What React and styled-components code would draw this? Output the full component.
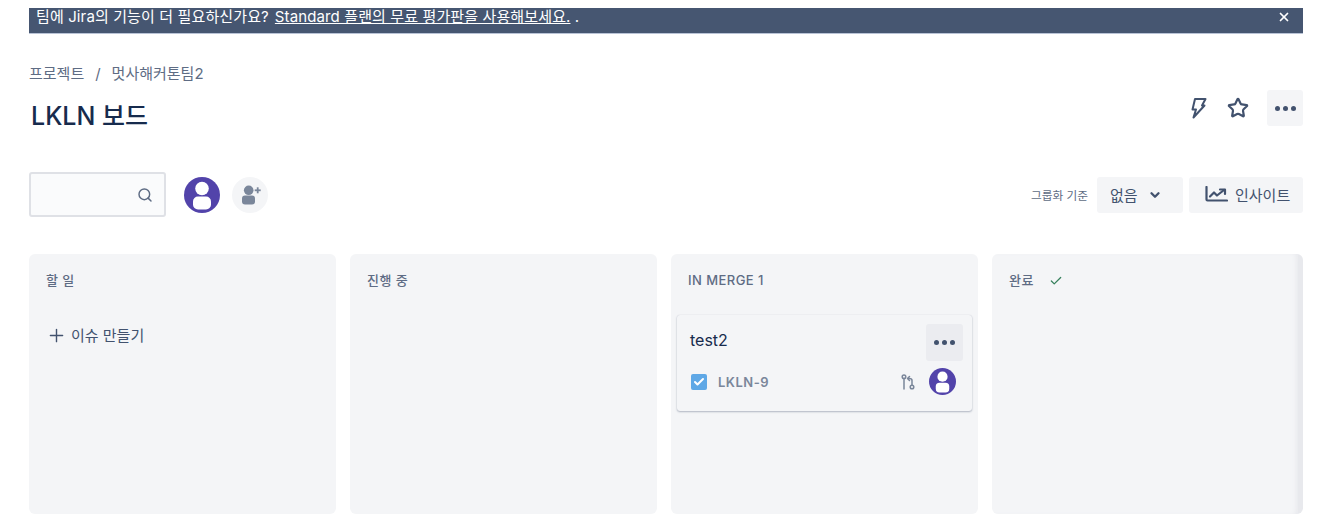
import React from 'react';
import styled, { createGlobalStyle } from 'styled-components';
import { Search, Star, X, ChevronDown, Plus, Check } from 'lucide-react';

const GlobalStyle = createGlobalStyle`
  html, body { margin: 0; padding: 0; background: #fff; }
  body {
    font-family: Inter, "Noto Sans CJK KR", sans-serif;
    color: #172b4d;
    overflow: hidden;
  }
`;

const Page = styled.div`
  box-sizing: border-box;
  width: 1338px;
  height: 516px;
  padding: 8px 35px 0 29px;
  overflow: hidden;
`;

const Banner = styled.div`
  display: flex;
  align-items: flex-start;
  justify-content: space-between;
  box-sizing: border-box;
  height: 26px;
  padding: 0 12px 0 7px;
  background: #465671;
  border-bottom: 1px solid #b9c3d6;
  color: #fff;
  font-size: 15px;
  line-height: 18px;
  letter-spacing: 0.12px;
`;

const BannerLink = styled.a`
  margin-left: 6px;
  color: #fff;
  text-decoration: underline;
`;

const Crumbs = styled.div`
  display: flex;
  gap: 11px;
  margin-top: 30px;
  color: #5e6c84;
  font-size: 15px;
  line-height: 20px;
`;

const TitleRow = styled.div`
  display: flex;
  justify-content: space-between;
  align-items: flex-start;
  height: 46px;
  margin-top: 6px;
`;

const Title = styled.h1`
  margin: 10px 0 0 2px;
  font-size: 25px;
  font-weight: 500;
  line-height: 32px;
  color: #172b4d;
`;

const Actions = styled.div`
  display: flex;
  align-items: center;
  height: 36px;
  color: #42526e;
`;

const IconSlot = styled.span`
  display: flex;
  align-items: center;
  justify-content: center;
  width: ${(props) => props.$width}px;
  height: 36px;
`;

const SquareButton = styled.button`
  display: flex;
  align-items: center;
  justify-content: center;
  gap: 3px;
  width: ${(props) => props.$size}px;
  height: ${(props) => props.$size}px;
  padding: 0;
  border: 0;
  border-radius: 3px;
  background: ${(props) => props.$bg};
`;

const Dot = styled.i`
  display: block;
  width: 5px;
  height: 5px;
  border-radius: 50%;
  background: #42526e;
`;

const Toolbar = styled.div`
  display: flex;
  justify-content: space-between;
  align-items: center;
  height: 45px;
  margin-top: 36px;
`;

const ToolGroup = styled.div`
  display: flex;
  align-items: center;
`;

const SearchBox = styled.div`
  display: flex;
  align-items: center;
  justify-content: flex-end;
  box-sizing: border-box;
  width: 137px;
  height: 45px;
  padding-right: 11px;
  margin-right: 18px;
  background: #fafbfc;
  border: 2px solid #dfe1e6;
  border-radius: 3px;
  color: #5e6c84;
`;

const AddMember = styled.span`
  display: flex;
  width: 36px;
  height: 36px;
  margin-left: 12px;
  border-radius: 50%;
  background: #f4f5f7;
`;

const GroupLabel = styled.span`
  margin-right: 9px;
  color: #5e6c84;
  font-size: 11.7px;
`;

const ToolButton = styled.button`
  display: flex;
  align-items: center;
  box-sizing: border-box;
  width: ${(props) => props.$width}px;
  height: 36px;
  margin-left: ${(props) => props.$gap}px;
  padding: 0 0 0 ${(props) => props.$pad}px;
  gap: ${(props) => props.$inner}px;
  border: 0;
  border-radius: 3px;
  background: #f4f5f7;
  color: #42526e;
  font-family: inherit;
  font-size: 15px;
  font-weight: 400;
`;

const Board = styled.div`
  display: flex;
  gap: 14px;
  margin-top: 37px;
`;

const Column = styled.section`
  box-sizing: border-box;
  flex: ${(props) => (props.$last ? '1' : '0 0 307px')};
  height: 260px;
  padding: 18px 6px 0;
  background: #f4f5f7;
  border-radius: 6px;
  ${(props) =>
    props.$last &&
    `border-right: 5px solid #e8e9ed;
     box-shadow: inset -4px 0 4px -2px #e9eaee;`}
`;

const ColumnHead = styled.div`
  display: flex;
  align-items: center;
  gap: 15px;
  height: 17px;
  padding-left: 11px;
  color: #5e6c84;
  font-size: 13px;
  font-weight: 500;
  line-height: 17px;
  letter-spacing: 0.45px;
`;

const CreateIssue = styled.div`
  display: flex;
  align-items: center;
  gap: 4px;
  margin: 36px 0 0 11px;
  color: #42526e;
  font-size: 15px;
  line-height: 20px;
`;

const Card = styled.article`
  box-sizing: border-box;
  height: 96px;
  margin-top: 26px;
  padding: 9px 9px 0 13px;
  background: #f4f5f7;
  border-radius: 3px;
  box-shadow: 0 1px 2px rgba(9, 30, 66, 0.28), 0 0 1px rgba(9, 30, 66, 0.16);
`;

const CardTop = styled.div`
  display: flex;
  justify-content: space-between;
  height: 37px;
`;

const CardTitle = styled.span`
  margin-top: 6px;
  color: #172b4d;
  font-size: 16px;
  line-height: 20px;
`;

const CardBottom = styled.div`
  display: flex;
  align-items: center;
  height: 27px;
  margin: 7px 7px 0 1px;
`;

const CheckMark = styled.span`
  display: flex;
  align-items: center;
  justify-content: center;
  width: 16px;
  height: 16px;
  border-radius: 2px;
  background: #5fa8e6;
`;

const IssueKey = styled.span`
  flex: 1;
  margin-left: 11px;
  color: #7a869a;
  font-size: 13px;
  font-weight: 600;
  letter-spacing: 0.5px;
`;

const BranchWrap = styled.span`
  display: flex;
  margin-right: 14px;
`;

function UserAvatar({ size }) {
  return (
    <svg width={size} height={size} viewBox="0 0 36 36">
      <circle cx="18" cy="18" r="18" fill="#5243aa" />
      <circle cx="18" cy="11.5" r="6.8" fill="#fff" />
      <rect x="9" y="19.5" width="18" height="13" rx="5" fill="#fff" />
    </svg>
  );
}

function Bolt() {
  return (
    <svg width="20" height="22" viewBox="0 0 20 22" fill="none" stroke="#42526e" strokeWidth="2" strokeLinejoin="round" strokeLinecap="round">
      <path d="M7 2H17.5L14 8.5H16.5L5.5 20.5 8 12.5H4.5z" />
    </svg>
  );
}

function AddPerson() {
  return (
    <svg width="36" height="36" viewBox="0 0 36 36" fill="#7a869a">
      <circle cx="16.7" cy="13.3" r="4.8" />
      <rect x="10" y="18.5" width="13" height="9" rx="3" />
      <rect x="22.7" y="12.4" width="6" height="1.8" />
      <rect x="24.8" y="10.3" width="1.8" height="6" />
    </svg>
  );
}

function InsightIcon() {
  return (
    <svg width="23" height="17" viewBox="0 0 23 17" fill="none" stroke="#42526e" strokeWidth="2.2" strokeLinecap="round" strokeLinejoin="round">
      <path d="M1.5 1v12.5c0 .7.4 1 1 1H22" />
      <path d="M5 10.5l4-4 3 3 7-5.5" />
      <path d="M15 3.5h5V8" />
    </svg>
  );
}

function BranchIcon() {
  return (
    <svg width="14" height="16" viewBox="0 0 14 16" fill="none" stroke="#7a869a" strokeWidth="1.5" strokeLinecap="round" strokeLinejoin="round">
      <circle cx="3" cy="2.8" r="1.8" />
      <path d="M3 4.6V15" />
      <circle cx="11" cy="13" r="1.8" />
      <path d="M11 11.2V6.5C11 5 10 4.5 8.5 4.5H7" />
      <path d="M8.5 2.5L6.5 4.5l2 2" />
    </svg>
  );
}

function MoreButton({ size, bg }) {
  return (
    <SquareButton $size={size} $bg={bg}>
      <Dot />
      <Dot />
      <Dot />
    </SquareButton>
  );
}

export default function App() {
  return (
    <>
      <GlobalStyle />
      <Page>
        <Banner>
          <span>
            팀에 Jira의 기능이 더 필요하신가요?
            <BannerLink>Standard 플랜의 무료 평가판을 사용해보세요.</BannerLink> .
          </span>
          <X size={14} strokeWidth={3} style={{ marginTop: 2 }} />
        </Banner>
        <Crumbs>
          <span>프로젝트</span>
          <span>/</span>
          <span>멋사해커톤팀2</span>
        </Crumbs>
        <TitleRow>
          <Title>LKLN 보드</Title>
          <Actions>
            <IconSlot $width={40}><Bolt /></IconSlot>
            <IconSlot $width={39}><Star size={22} strokeWidth={2.4} /></IconSlot>
            <IconSlot $width={10} />
            <MoreButton size={36} bg="#f4f5f7" />
          </Actions>
        </TitleRow>
        <Toolbar>
          <ToolGroup>
            <SearchBox><Search size={16} strokeWidth={2.2} /></SearchBox>
            <UserAvatar size={36} />
            <AddMember><AddPerson /></AddMember>
          </ToolGroup>
          <ToolGroup>
            <GroupLabel>그룹화 기준</GroupLabel>
            <ToolButton $width={86} $gap={0} $pad={13} $inner={10}>
              없음 <ChevronDown size={14} strokeWidth={4} />
            </ToolButton>
            <ToolButton $width={114} $gap={6} $pad={16} $inner={7}>
              <InsightIcon /> 인사이트
            </ToolButton>
          </ToolGroup>
        </Toolbar>
        <Board>
          <Column>
            <ColumnHead>할 일</ColumnHead>
            <CreateIssue><Plus size={21} strokeWidth={1.6} /> 이슈 만들기</CreateIssue>
          </Column>
          <Column>
            <ColumnHead>진행 중</ColumnHead>
          </Column>
          <Column>
            <ColumnHead>IN MERGE 1</ColumnHead>
            <Card>
              <CardTop>
                <CardTitle>test2</CardTitle>
                <MoreButton size={37} bg="#ebecf0" />
              </CardTop>
              <CardBottom>
                <CheckMark><Check size={12} color="#fff" strokeWidth={4} /></CheckMark>
                <IssueKey>LKLN-9</IssueKey>
                <BranchWrap><BranchIcon /></BranchWrap>
                <UserAvatar size={27} />
              </CardBottom>
            </Card>
          </Column>
          <Column $last>
            <ColumnHead>완료 <Check size={14} color="#36805c" strokeWidth={2.2} /></ColumnHead>
          </Column>
        </Board>
      </Page>
    </>
  );
}
